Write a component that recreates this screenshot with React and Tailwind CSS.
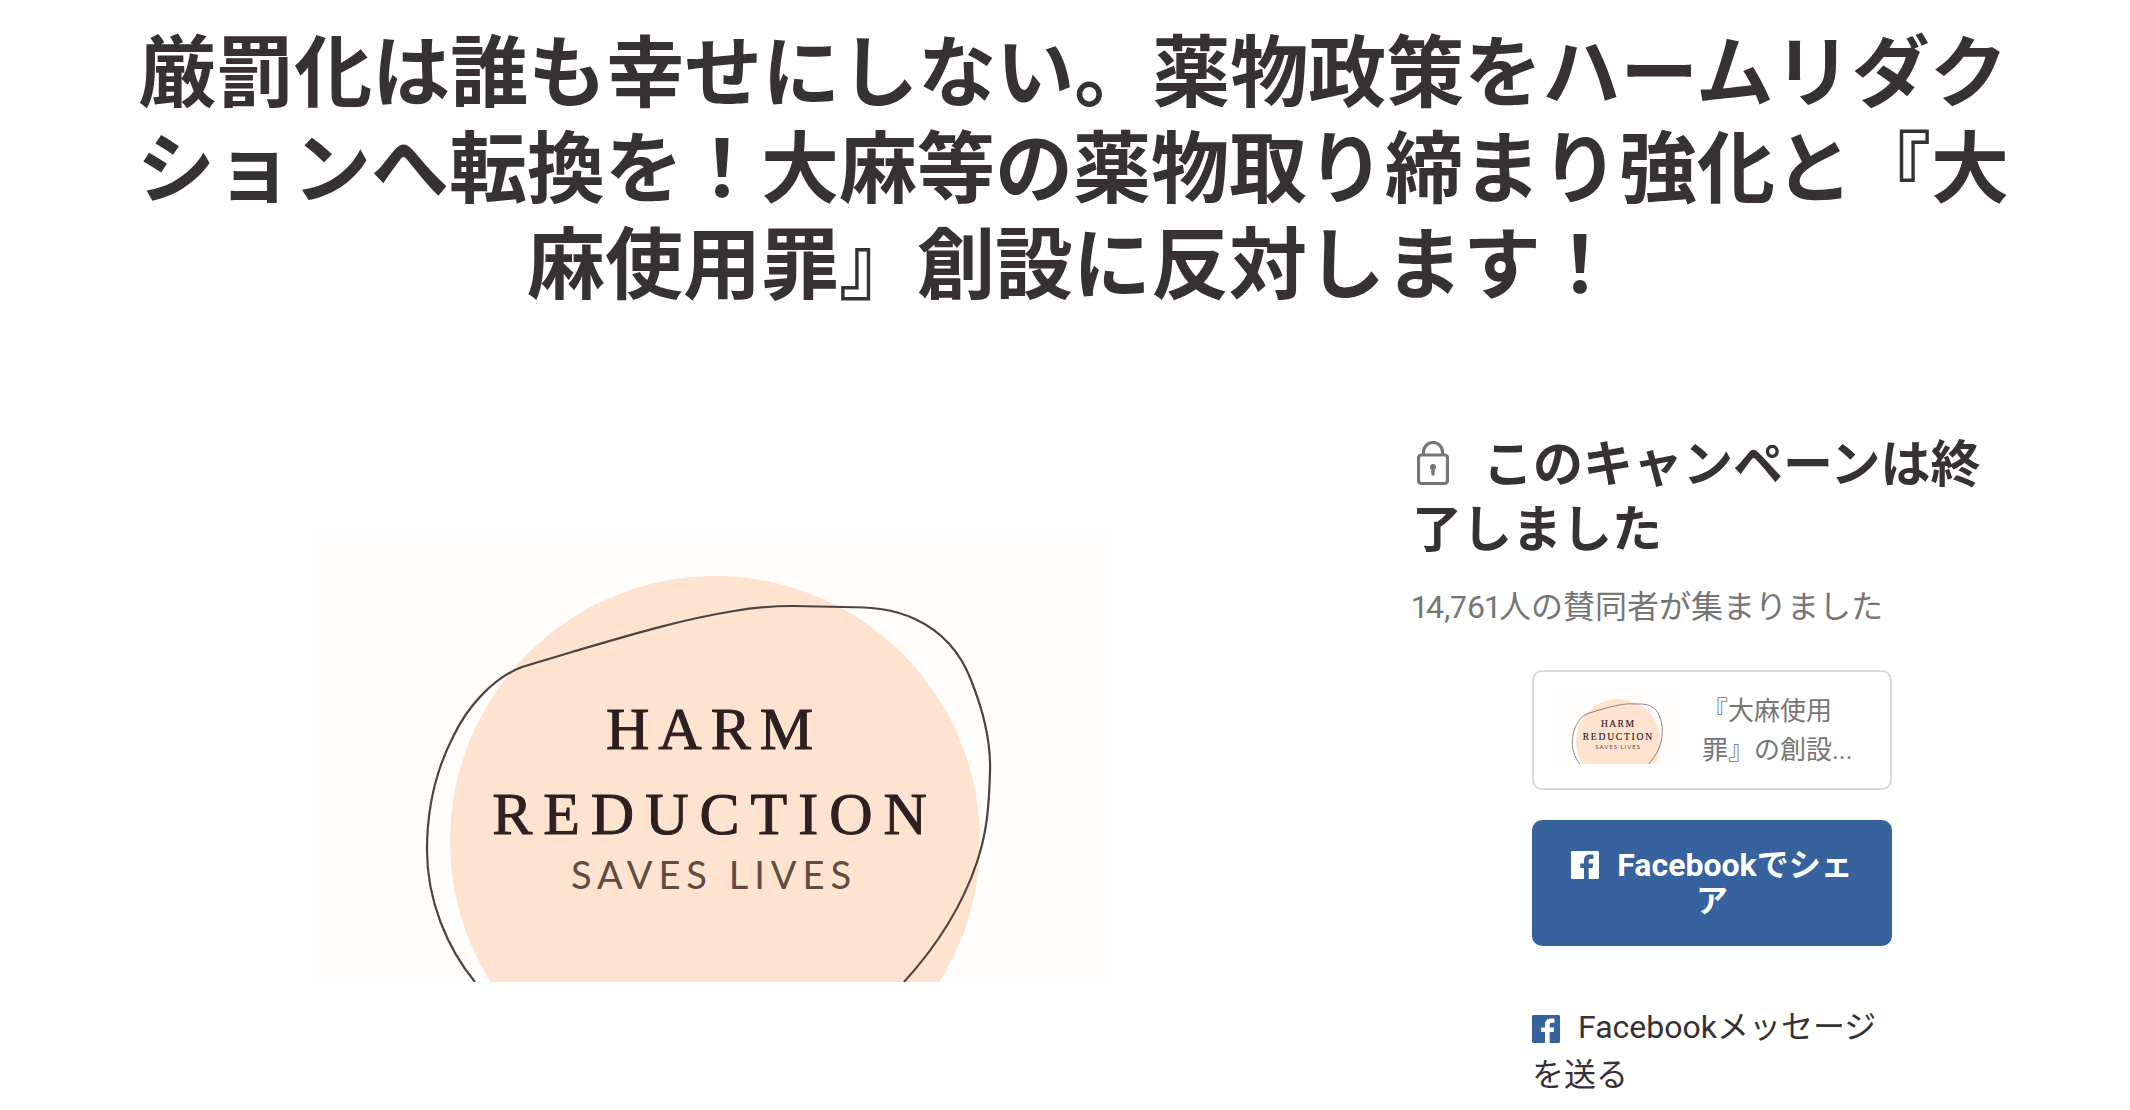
import React from "react";

const JP = "font-[Roboto,'Noto_Sans_CJK_JP',sans-serif]";

function CampaignArt({ className, lineWidth = 2.2 }) {
  return (
    <svg viewBox="0 0 800 450" role="img" aria-label="Harm Reduction Saves Lives" className={className}>
      <rect width="800" height="450" fill="#fffefc" />
      <circle cx="402" cy="309" r="265" fill="#fee4d0" />
      <path
        d="M162 450C134 416 114 368 114 318C114 280 122 240 140 205C154 175 180 146 209 135L259 120C310 105 365 88 421 79C445 75 460 74 480 74L530 75C560 75 580 77 602 87C630 100 648 122 658 148C672 183 678 212 677 240C676 275 674 300 664 330C648 378 622 416 591 450"
        fill="none"
        stroke="#4c4442"
        strokeWidth={lineWidth}
      />
      <g textAnchor="middle" fill="#2e2021">
        <text x="401" y="217" className="font-['Liberation_Serif',serif] text-[60px] tracking-[9px]" stroke="#2e2021" strokeWidth="1">HARM</text>
        <text x="402" y="302" className="font-['Liberation_Serif',serif] text-[60px] tracking-[11px]" stroke="#2e2021" strokeWidth="1">REDUCTION</text>
        <text x="401" y="357" fill="#5f4c43" className="font-[Lato,sans-serif] text-[38px] tracking-[6px]">SAVES LIVES</text>
      </g>
    </svg>
  );
}

function LockIcon({ className }) {
  return (
    <svg viewBox="0 0 32 44" className={className} fill="none" stroke="#767676" aria-hidden="true">
      <rect x="1.5" y="14" width="29" height="28.5" rx="3" strokeWidth="3.2" />
      <path d="M6.500 14V11a9.500 9.500 0 0 1 19 0v3" strokeWidth="3.200" />
      <circle cx="16" cy="26" r="3" fill="#767676" stroke="none" />
      <path d="M16 26v7" strokeWidth="3.400" strokeLinecap="round" />
    </svg>
  );
}

function FacebookIcon({ className }) {
  return (
    <svg viewBox="0 0 28 28" className={className} fill="currentColor" aria-hidden="true">
      <path d="M26.5 0H1.5A1.5 1.5 0 0 0 0 1.5v25A1.5 1.5 0 0 0 1.5 28H13V17H9.200v-4.500H13V9.500C13 5.600 15.400 3.500 18.900 3.500c1.700 0 3.100.1 3.600.2v4h-2.500c-1.900 0-2.300.9-2.300 2.300v2.500h4.500l-.6 4.500h-3.900V28h8.800a1.500 1.500 0 0 0 1.500-1.500v-25A1.500 1.500 0 0 0 26.500 0z" />
    </svg>
  );
}

export default function App() {
  return (
    <main className={`${JP} bg-white text-[#363135]`} lang="ja">
      <h1 className="pt-[27px] pl-[123px] pr-[107px] text-center text-[78px] leading-[96px] font-bold">
        厳罰化は誰も幸せにしない。薬物政策をハームリダクションへ転換を！大麻等の薬物取り締まり強化と『大麻使用罪』創設に反対します！
      </h1>

      <div className="mt-[118px] flex gap-[109px] pl-[123px] pr-[118px]">
        <section className="flex flex-1 items-start justify-center pt-[99px]">
          <CampaignArt className="w-full max-w-[800px]" />
        </section>

        <aside className="w-[600px] shrink-0">
          <h2 className="text-[50px] leading-[65px] font-bold">
            <LockIcon className="mr-[34px] ml-[5px] inline-block h-11 w-8 align-[-3px]" />
            このキャンペーンは終了しました
          </h2>
          <p className="mt-5 text-[32px] leading-[48px] text-[#767676]">
            <span className="[font-feature-settings:'pnum']">14,761</span>人の賛同者が集まりました
          </p>

          <div className="mx-auto mt-[39px] w-[360px]">
            <a href="#petition" className="flex h-[120px] items-start gap-5 rounded-[10px] border-2 border-[#d9d9d9] px-5 pt-5 text-[#767676]">
              <CampaignArt className="w-32 shrink-0" lineWidth={4} />
              <span className="text-[26px] leading-[39px]">『大麻使用罪』の創設...</span>
            </a>

            <button type="button" className="mt-[30px] w-full rounded-[10px] bg-[#36639e] px-[30px] py-[27px] text-center text-[32px] leading-[36px] font-bold text-white">
              <FacebookIcon className="mr-[18px] inline-block size-7 align-[-3px]" />
              Facebookでシェア
            </button>

            <a href="#message" className="mt-[57px] block text-[32px] leading-[48px]">
              <FacebookIcon className="mr-[18px] inline-block size-7 align-[-5px] text-[#36639e]" />
              Facebookメッセージを送る
            </a>
          </div>
        </aside>
      </div>
    </main>
  );
}
